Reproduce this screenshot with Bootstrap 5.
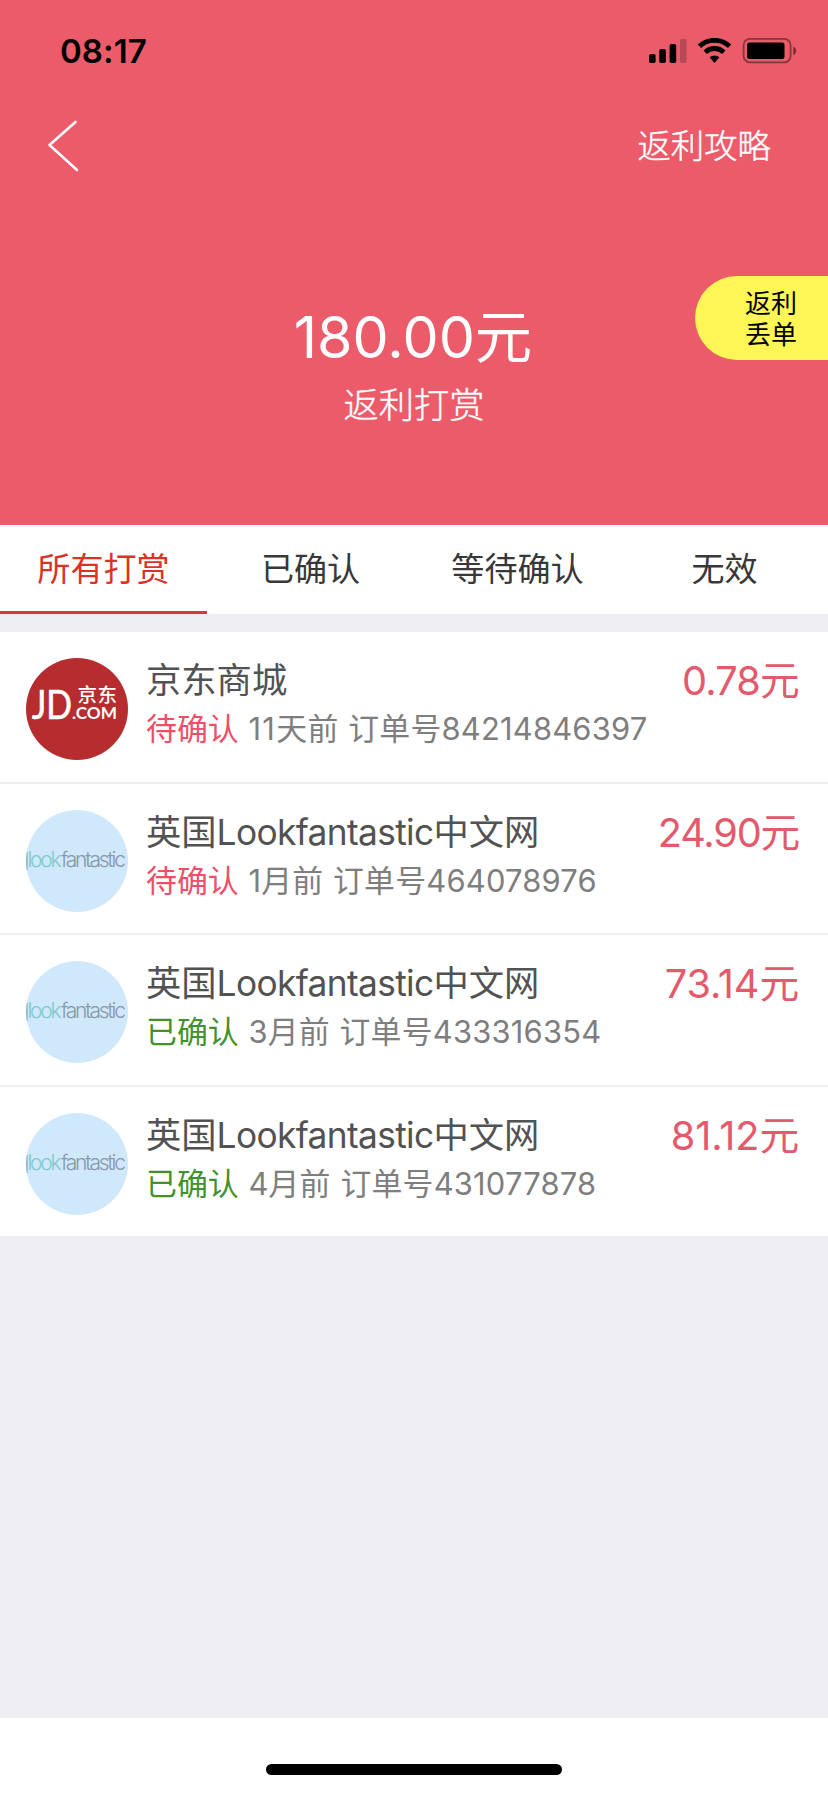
<!DOCTYPE html>
<html lang="zh-CN">
<head>
<meta charset="utf-8">
<meta name="viewport" content="width=device-width, initial-scale=1">
<title>返利打赏</title>
<link href="https://cdn.jsdelivr.net/npm/bootstrap@5.3.0/dist/css/bootstrap.min.css" rel="stylesheet">
<style>
  body { font-family: Inter, "Noto Sans CJK SC", sans-serif; background: #eeeef3; color: #525252; line-height: 1; font-weight: 400; }
  .screen { height: 1793px; overflow: hidden; }
  .hero { height: 525px; background: #eb5b69; }
  .status-row { height: 102px; padding: 0 31px 0 60px; color: #000; }
  .clock { font-size: 33px; font-weight: 600; letter-spacing: .1px; }
  .title-row { height: 88px; padding: 0 57px 0 47px; }
  .guide { font-size: 33.4px; font-weight: 300; padding-top: 2px; -webkit-text-stroke: .4px #fff; }
  .total { font-size: 57.4px; line-height: 72px; margin-top: 111px; margin-left: -2px; }
  .total-label { font-size: 35.3px; font-weight: 300; line-height: 48px; margin-top: 9px; -webkit-text-stroke: .4px #fff; }
  .lost-order { top: 276px; right: 0; width: 133px; height: 84px; border-radius: 42px 0 0 42px; background: #fef656; color: #000; font-size: 26px; line-height: 31px; padding: 2px 0 0 19px; }
  .tabs-row { height: 89px; background: #fff; }
  .tab-item { font-size: 33.1px; color: #383838; border: 0; border-bottom: 3px solid transparent; padding-top: 4px; text-decoration: none; }
  .tab-item.current { color: #dc3226; border-color: #dc3a30; }
  .orders { margin-top: 18px; }
  .order { height: 151.67px; padding: 25px 29px 0 26px; background: #fff; border-bottom: 2.67px solid #eeeef3; }
  .order:last-child { height: 149px; border: 0; }
  .shop-logo { width: 102px; height: 102px; margin-top: 1px; }
  .order-body { margin-left: 18px; }
  .shop { font-size: 35.3px; line-height: 48px; }
  .latin { letter-spacing: -.65px; }
  .meta { font-size: 30.9px; line-height: 44px; color: #7e7e7e; margin-top: 2px; letter-spacing: .2px; word-spacing: .8px; }
  .meta .days { letter-spacing: 1.4px; }
  .wait, .done { letter-spacing: 0; }
  .amount { font-size: 39.7px; line-height: 48px; color: #e35a6c; letter-spacing: -.8px; }
  .amount.snug { letter-spacing: -1.2px; }
  .amount.airy { letter-spacing: -.1px; }
  .wait { color: #eb5068; }
  .done { color: #3f9328; }
  .home { height: 75px; background: #fff; padding-top: 46px; }
  .home-bar { width: 296px; height: 11px; background: #000; }
</style>
</head>
<body>
<svg class="d-none">
  <symbol id="look" viewBox="0 0 102 102">
    <circle cx="51" cy="51" r="51" fill="#d0e8fc"/>
    <path d="M.8 42A51 51 0 0 0 .8 60L1.800 60V42Z" fill="#8fb9c8"/>
    <g font-family="Inter, sans-serif" font-weight="300" font-size="21">
      <text x="1.500" y="57" textLength="34" lengthAdjust="spacing" fill="#7fcacb">look</text>
      <text x="35" y="57" textLength="65" lengthAdjust="spacing" fill="#8798a9">fantastic</text>
    </g>
  </symbol>
</svg>
<div class="screen d-flex flex-column">
  <header class="hero position-relative">
    <div class="status-row d-flex align-items-center justify-content-between">
      <span class="clock">08:17</span>
      <svg width="148" height="26" viewBox="649 38 148 26">
        <rect x="649" y="54" width="6.600" height="9" rx="1.800"/>
        <rect x="659.300" y="49" width="6.600" height="14" rx="1.800"/>
        <rect x="669.600" y="44" width="6.600" height="19" rx="1.800"/>
        <rect x="680" y="39" width="6.600" height="24" rx="1.800" opacity=".22"/>
        <g fill="none" stroke="#000" stroke-width="4.800">
          <path d="M699.400 46.300a22 22 0 0 1 30.200 0"/>
          <path d="M705.200 52.200a13.600 13.600 0 0 1 18.600 0"/>
        </g>
        <path d="M709.700 57.300a7.400 7.400 0 0 1 9.600 0l-4.800 5.600z"/>
        <rect x="743.600" y="38.800" width="47" height="23.600" rx="6.500" fill="none" stroke="#000" stroke-opacity=".42" stroke-width="1.800"/>
        <rect x="747" y="42.500" width="37.500" height="16.500" rx="2.500"/>
        <path d="M793.300 46.500c3.800 1.200 3.800 7.200 0 8.600z" opacity=".5"/>
      </svg>
    </div>
    <nav class="title-row d-flex align-items-center justify-content-between text-white">
      <svg width="32" height="52" viewBox="0 0 32 52" fill="none" stroke="#fff" stroke-width="2.600" stroke-linecap="round" stroke-linejoin="round"><path d="M28.500 2 2.500 25 30 50"/></svg>
      <span class="guide">返利攻略</span>
    </nav>
    <div class="text-center text-white">
      <div class="total">180.00元</div>
      <div class="total-label">返利打赏</div>
    </div>
    <div class="lost-order position-absolute d-flex align-items-center justify-content-center"><div>返利<br>丢单</div></div>
  </header>
  <nav class="tabs-row d-flex">
    <a class="tab-item current col-3 d-flex align-items-center justify-content-center">所有打赏</a>
    <a class="tab-item col-3 d-flex align-items-center justify-content-center">已确认</a>
    <a class="tab-item col-3 d-flex align-items-center justify-content-center">等待确认</a>
    <a class="tab-item col-3 d-flex align-items-center justify-content-center">无效</a>
  </nav>
  <main class="orders flex-grow-1">
    <div class="order d-flex">
      <svg class="shop-logo flex-shrink-0" viewBox="0 0 102 102">
        <circle cx="51" cy="51" r="51" fill="#b72c2e"/>
        <g fill="#fff" font-family="Lato, sans-serif">
          <text x="6" y="60.500" font-size="41" textLength="40" lengthAdjust="spacingAndGlyphs" stroke="#fff" stroke-width=".7">JD</text>
          <text x="51.500" y="44" font-size="19.500" font-weight="500" font-family="Noto Sans CJK SC" textLength="39.500">京东</text>
          <text x="46" y="60.500" font-size="17" font-weight="700" textLength="45" lengthAdjust="spacingAndGlyphs">.COM</text>
        </g>
      </svg>
      <div class="order-body flex-grow-1">
        <div class="d-flex justify-content-between"><span class="shop">京东商城</span><span class="amount">0.78元</span></div>
        <div class="meta"><span class="wait">待确认</span> <span class="days">11</span>天前 订单号84214846397</div>
      </div>
    </div>
    <div class="order d-flex">
      <svg class="shop-logo flex-shrink-0"><use href="#look"/></svg>
      <div class="order-body flex-grow-1">
        <div class="d-flex justify-content-between"><span class="shop">英国<span class="latin">Lookfantastic</span>中文网</span><span class="amount snug">24.90元</span></div>
        <div class="meta"><span class="wait">待确认</span> 1月前 订单号464078976</div>
      </div>
    </div>
    <div class="order d-flex">
      <svg class="shop-logo flex-shrink-0"><use href="#look"/></svg>
      <div class="order-body flex-grow-1">
        <div class="d-flex justify-content-between"><span class="shop">英国<span class="latin">Lookfantastic</span>中文网</span><span class="amount airy">73.14元</span></div>
        <div class="meta"><span class="done">已确认</span> 3月前 订单号433316354</div>
      </div>
    </div>
    <div class="order d-flex">
      <svg class="shop-logo flex-shrink-0"><use href="#look"/></svg>
      <div class="order-body flex-grow-1">
        <div class="d-flex justify-content-between"><span class="shop">英国<span class="latin">Lookfantastic</span>中文网</span><span class="amount airy">81.12元</span></div>
        <div class="meta"><span class="done">已确认</span> 4月前 订单号431077878</div>
      </div>
    </div>
  </main>
  <footer class="home"><div class="home-bar rounded-pill mx-auto"></div></footer>
</div>
<script src="https://cdn.jsdelivr.net/npm/bootstrap@5.3.0/dist/js/bootstrap.bundle.min.js"></script>
</body>
</html>
